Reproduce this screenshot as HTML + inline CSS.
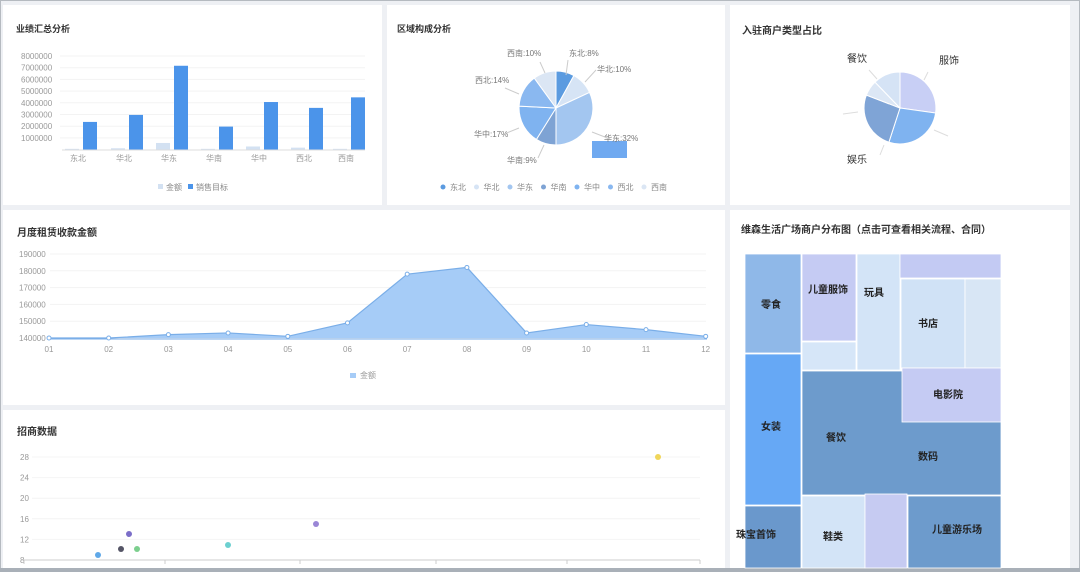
<!DOCTYPE html><html><head><meta charset="utf-8"><style>
body{margin:0;width:1080px;height:572px;background:#eef0f4;font-family:"Liberation Sans","Noto Sans CJK SC",sans-serif;overflow:hidden;position:relative}
.p{position:absolute;background:#fff}
.t{position:absolute;font-size:10px;font-weight:bold;color:#333}
svg{position:absolute;left:0;top:0}
</style></head><body>
<div style="position:absolute;left:0;top:0;width:1078px;height:570px;border:1px solid #b5bac0"></div>
<div class="p" style="left:3px;top:5px;width:379px;height:200px"></div>
<div class="p" style="left:387px;top:5px;width:338px;height:200px"></div>
<div class="p" style="left:730px;top:5px;width:340px;height:200px"></div>
<div class="p" style="left:3px;top:210px;width:722px;height:195px"></div>
<div class="p" style="left:3px;top:410px;width:722px;height:158px"></div>
<div class="p" style="left:730px;top:210px;width:340px;height:358px"></div>
<div style="position:absolute;left:0;top:568px;width:1080px;height:4px;background:#a9b0b8"></div>
<div class="t" style="left:16px;top:22px;font-size:9px">业绩汇总分析</div>
<div class="t" style="left:397px;top:22px;font-size:9px">区域构成分析</div>
<div class="t" style="left:742px;top:22px">入驻商户类型占比</div>
<div class="t" style="left:17px;top:224px">月度租赁收款金额</div>
<div class="t" style="left:17px;top:423px">招商数据</div>
<div class="t" style="left:741px;top:221px">维森生活广场商户分布图（点击可查看相关流程、合同）</div>
<svg id="s" width="1080" height="572" font-family="Liberation Sans, Noto Sans CJK SC, sans-serif"></svg>
<script>
var h='';
var yl=['8000000','7000000','6000000','5000000','4000000','3000000','2000000','1000000'];
for(var i=0;i<8;i++){var y=56+i*11.7;h+='<text x="21" y="'+(y+3)+'" font-size="8" fill="#999">'+yl[i]+'</text>';h+='<line x1="60" x2="365" y1="'+y+'" y2="'+y+'" stroke="#f3f3f3"/>';}
var cx=[76,122,167,212,257,302,344],cn=['东北','华北','华东','华南','华中','西北','西南'],bv=[2.4,3,7.2,2,4.1,3.6,4.5],lv=[.1,.15,.6,.1,.3,.2,.1];
for(i=0;i<7;i++){var b=150;h+='<rect x="'+(cx[i]-11)+'" y="'+(b-lv[i]*11.7)+'" width="14" height="'+(lv[i]*11.7)+'" fill="#d3e1f2"/>';h+='<rect x="'+(cx[i]+7)+'" y="'+(b-bv[i]*11.7)+'" width="14" height="'+(bv[i]*11.7)+'" fill="#4b94ea"/>';h+='<text x="'+(cx[i]+2)+'" y="161" font-size="8" fill="#999" text-anchor="middle">'+cn[i]+'</text>';}
h+='<line x1="62" x2="365" y1="150" y2="150" stroke="#ddd"/>';
h+='<rect x="158" y="184" width="5" height="5" fill="#d3e1f2"/><text x="166" y="190" font-size="8" fill="#888">金额</text><rect x="188" y="184" width="5" height="5" fill="#4b94ea"/><text x="196" y="190" font-size="8" fill="#888">销售目标</text>';
function pie(c1,c2,r,sl){var a=0,o='';for(var k=0;k<sl.length;k++){var a0=a*Math.PI/180,a1=(a+sl[k][0])*Math.PI/180;var x0=c1+r*Math.sin(a0),y0=c2-r*Math.cos(a0),x1=c1+r*Math.sin(a1),y1=c2-r*Math.cos(a1);o+='<path d="M'+c1+' '+c2+'L'+x0.toFixed(1)+' '+y0.toFixed(1)+'A'+r+' '+r+' 0 '+(sl[k][0]>180?1:0)+' 1 '+x1.toFixed(1)+' '+y1.toFixed(1)+'Z" fill="'+sl[k][1]+'" stroke="#fff" stroke-width="1"/>';a+=sl[k][0];}return o;}
h+=pie(556,108,37,[[29,'#5b9be0'],[36,'#d6e4f5'],[115,'#a3c6f0'],[32,'#7ea3d4'],[61,'#7fb3f0'],[51,'#8ab8f0'],[36,'#dbe6f4']]);
h+='<rect x="592" y="141" width="35" height="17" fill="#6fa9f0"/>';
var pl=[[569,56,'东北:8%'],[597,72,'华北:10%'],[604,141,'华东:32%'],[507,163,'华南:9%'],[474,137,'华中:17%'],[475,83,'西北:14%'],[507,56,'西南:10%']];
pl.forEach(function(p){h+='<text x="'+p[0]+'" y="'+p[1]+'" font-size="8" fill="#777">'+p[2]+'</text>';});
h+='<path d="M568 60 L566 75 M596 70 L585 82 M592 132 L610 139 M544 145 L538 158 M519 128 L504 134 M519 94 L505 88 M545 73 L540 62" stroke="#ccc" fill="none"/>';
var lg=[['东北','#5b9be0'],['华北','#d6e4f5'],['华东','#a3c6f0'],['华南','#7ea3d4'],['华中','#7fb3f0'],['西北','#8ab8f0'],['西南','#dbe6f4']];
for(i=0;i<7;i++){var x=443+i*33.5;h+='<circle cx="'+x+'" cy="187" r="2.5" fill="'+lg[i][1]+'"/><text x="'+(x+7)+'" y="190" font-size="8" fill="#888">'+lg[i][0]+'</text>';}
h+=pie(900,108,36,[[98,'#c8cff5'],[100,'#7fb3f0'],[93,'#7fa4d6'],[25,'#dce7f5'],[44,'#d5e3f5']]);
h+='<text x="847" y="62" font-size="10" fill="#333">餐饮</text><text x="939" y="64" font-size="10" fill="#333">服饰</text><text x="847" y="163" font-size="10" fill="#333">娱乐</text>';
h+='<path d="M869 70 L877 79 M928 72 L924 80 M934 130 L948 136 M884 145 L880 155 M843 114 L858 112" stroke="#ddd" fill="none"/>';
var lv2=[140,140,142,143,141,149,178,182,143,148,145,141];
for(i=0;i<6;i++){var y=338-i*16.8;h+='<text x="19" y="'+(y+3)+'" font-size="8" fill="#999">'+(140000+i*10000)+'</text><line x1="50" x2="706" y1="'+y+'" y2="'+y+'" stroke="#f3f3f3"/>';}
var pts=lv2.map(function(v,k){return [49+k*59.7,338-(v-140)*1.68];});
var d='M49 338 '+pts.map(function(p){return 'L'+p[0].toFixed(1)+' '+p[1].toFixed(1);}).join(' ')+' L706 338Z';
h+='<path d="'+d+'" fill="#a6ccf7"/><polyline points="'+pts.map(function(p){return p.join(',');}).join(' ')+'" fill="none" stroke="#7aaee8" stroke-width="1.2"/>';
h+='<line x1="49" x2="707" y1="339" y2="339" stroke="#7aaee8"/>';
pts.forEach(function(p,k){h+='<circle cx="'+p[0]+'" cy="'+p[1]+'" r="2" fill="#fff" stroke="#7aaee8"/><text x="'+p[0]+'" y="352" font-size="8" fill="#999" text-anchor="middle">'+(k<9?'0':'')+(k+1)+'</text>';});
h+='<rect x="350" y="373" width="6" height="5" fill="#a6ccf7"/><text x="360" y="378" font-size="8" fill="#999">金额</text>';
var sy=[28,24,20,16,12,8];
sy.forEach(function(v){var y=560-(v-8)*5.15;h+='<text x="20" y="'+(y+3)+'" font-size="8" fill="#999">'+v+'</text><line x1="32" x2="700" y1="'+y+'" y2="'+y+'" stroke="#f4f4f4"/>';});
h+='<line x1="24" x2="700" y1="560" y2="560" stroke="#ccc"/>';
[24,165,300,436,567,700].forEach(function(x){h+='<line x1="'+x+'" x2="'+x+'" y1="560" y2="564" stroke="#ccc"/>';});
[[98,555,'#5fa8e8'],[121,549,'#555566'],[129,534,'#7b6ec8'],[137,549,'#7ccf8e'],[228,545,'#6cd0d0'],[316,524,'#9a86d6'],[658,457,'#f0d65a']].forEach(function(p){h+='<circle cx="'+p[0]+'" cy="'+p[1]+'" r="3" fill="'+p[2]+'"/>';});
var tm=[[745,254,56,99,'#8fb8e8','零食'],[745,354,56,151,'#66a8f5','女装'],[745,506,56,62,'#6a98cc','珠宝首饰'],[802,254,54,87,'#c5cbf3','儿童服饰'],[802,342,54,28,'#d6e6f8',''],[857,254,43,116,'#d3e4f7','玩具'],[900,254,101,24,'#c3caf3',''],[901,279,64,89,'#d0e2f6','书店'],[965,279,36,89,'#d8e6f5',''],[802,371,199,124,'#6d9bcc',''],[902,368,99,54,'#c5cbf3','电影院'],[802,496,63,72,'#d3e4f7','鞋类'],[865,494,42,74,'#c6cbf2',''],[908,496,93,72,'#6d9bcc','儿童游乐场']];
tm.forEach(function(r){h+='<rect x="'+r[0]+'" y="'+r[1]+'" width="'+r[2]+'" height="'+r[3]+'" fill="'+r[4]+'" stroke="#fff" stroke-width="0.8"/>';});
var tl=[[771,308,'零食'],[771,430,'女装'],[756,538,'珠宝首饰'],[828,293,'儿童服饰'],[874,296,'玩具'],[928,327,'书店'],[948,398,'电影院'],[836,441,'餐饮'],[928,460,'数码'],[833,540,'鞋类'],[957,533,'儿童游乐场']];
tl.forEach(function(t){h+='<text x="'+t[0]+'" y="'+t[1]+'" font-size="10" font-weight="bold" fill="#222" text-anchor="middle">'+t[2]+'</text>';});
document.getElementById('s').innerHTML=h;
</script>
</body></html>
